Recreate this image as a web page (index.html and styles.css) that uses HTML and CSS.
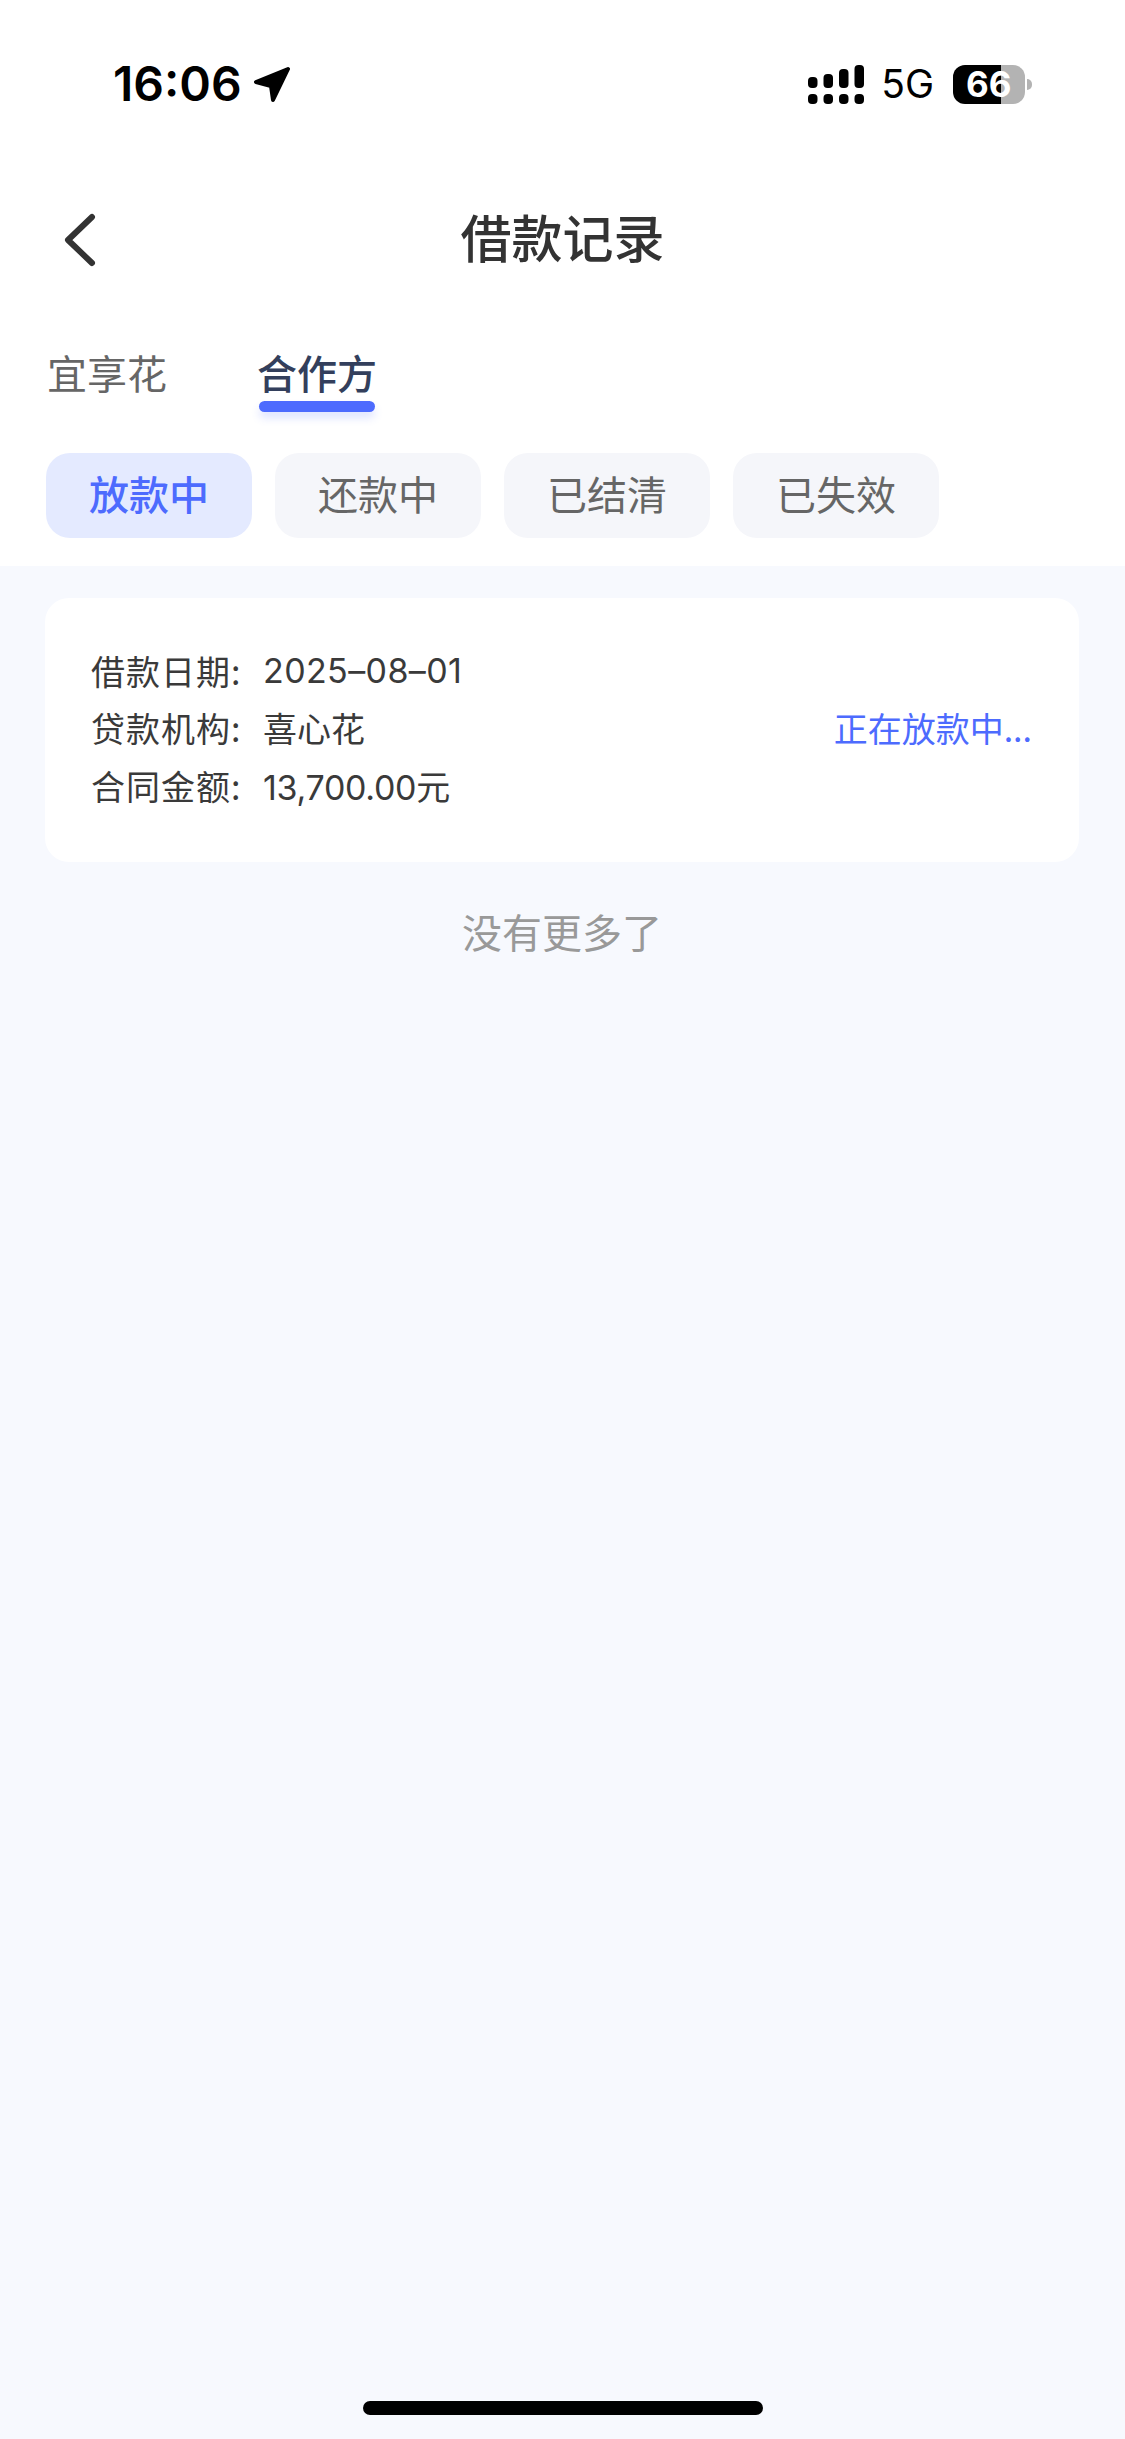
FILE: index.html
```html
<!DOCTYPE html>
<html lang="zh-CN">
<head>
<meta charset="utf-8">
<title>借款记录</title>
<link rel="stylesheet" href="styles.css">
</head>
<body>
<div class="page">
  <header class="top">
    <div class="status">
      <div class="status-left">
        <span class="time">16:06</span>
        <svg class="loc" width="38" height="37" viewBox="0 0 38 37"><path d="M35 3 L3 16 L18 20 L20 34 Z" fill="#000" stroke="#000" stroke-width="4" stroke-linejoin="round"/></svg>
      </div>
      <div class="status-right">
        <svg class="signal" width="56" height="39" viewBox="0 0 56 39">
          <g fill="#000">
            <rect x="0" y="12" width="9.5" height="11" rx="4"/><rect x="15.5" y="9" width="9.5" height="14" rx="4"/><rect x="31" y="4" width="9.5" height="19" rx="4"/><rect x="46.5" y="0" width="9.5" height="23" rx="4"/>
            <rect x="0" y="29" width="9.5" height="10" rx="4"/><rect x="15.5" y="29" width="9.5" height="10" rx="4"/><rect x="31" y="29" width="9.5" height="10" rx="4"/><rect x="46.5" y="29" width="9.5" height="10" rx="4"/>
          </g>
        </svg>
        <span class="net">5G</span>
        <div class="battery"><div class="battery-body"><span class="battery-text">66</span></div><i class="battery-nub"></i></div>
      </div>
    </div>
    <nav class="nav">
      <svg class="back" width="36" height="56" viewBox="0 0 36 56"><path d="M30 5 L6 28 L30 51" fill="none" stroke="#333" stroke-width="6" stroke-linecap="round" stroke-linejoin="round"/></svg>
      <h1 class="title">借款记录</h1>
    </nav>
    <div class="tabs">
      <div class="tab">宜享花</div>
      <div class="tab tab-active">合作方</div>
    </div>
    <div class="chips">
      <div class="chip chip-active">放款中</div>
      <div class="chip">还款中</div>
      <div class="chip">已结清</div>
      <div class="chip">已失效</div>
    </div>
  </header>
  <main class="content">
    <section class="card">
      <div class="rows">
        <div class="row"><span class="label">借款日期:</span><span class="val val-date">2025–08–01</span></div>
        <div class="row"><span class="label">贷款机构:</span><span class="val">喜心花</span></div>
        <div class="row"><span class="label">合同金额:</span><span class="val val-amount">13,700.00元</span></div>
      </div>
      <div class="state">正在放款中...</div>
    </section>
    <p class="end">没有更多了</p>
  </main>
  <div class="home"></div>
</div>
</body>
</html>
```
FILE: styles.css
```css
* { box-sizing: border-box; }
html, body { margin: 0; padding: 0; }
body { font-family: "Inter", "Noto Sans CJK SC", sans-serif; background: #f7f9fe; }
.page { position: relative; width: 1125px; height: 2439px; display: flex; flex-direction: column; overflow: hidden; }
.top { background: #fff; padding-bottom: 28px; }

.status { height: 180px; padding: 62px 93px 0 113px; display: flex; justify-content: space-between; align-items: flex-start; }
.status-left { display: flex; align-items: center; gap: 11px; height: 44px; }
.time { font-size: 48px; font-weight: 600; line-height: 44px; color: #000; }
.loc { display: block; }
.status-right { display: flex; align-items: center; height: 44px; }
.signal { display: block; }
.net { font-size: 39px; line-height: 40px; color: #000; margin-left: 17px; }
.battery { display: flex; align-items: center; margin-left: 19px; }
.battery-body { width: 72px; height: 39px; border-radius: 12px; background: linear-gradient(90deg, #000 0 48px, #b3b3b3 48px 100%); display: flex; align-items: center; padding-left: 13px; }
.battery-text { font-size: 35px; line-height: 39px; font-weight: 700; color: #fff; }
.battery-nub { display: block; width: 5px; height: 11px; margin-left: 2px; background: #b3b3b3; border-radius: 0 5px 5px 0; }

.nav { height: 120px; position: relative; display: flex; align-items: center; justify-content: center; padding-bottom: 8px; }
.back { position: absolute; left: 62px; top: 32px; display: block; }
.title { margin: 0; font-size: 51px; line-height: 70px; font-weight: 500; color: #333; font-family: "Noto Sans CJK SC", sans-serif; }

.tabs { display: flex; gap: 90px; padding: 45px 0 0 47px; height: 153px; }
.tab { position: relative; font-family: "Noto Sans CJK SC", sans-serif; font-size: 40px; line-height: 54px; color: #666; height: 54px; }
.tab-active { color: #333f5c; font-weight: 500; }
.tab-active::after { content: ""; position: absolute; left: 2px; right: 2px; top: 56px; height: 11px; border-radius: 6px; background: #4d6bfe; box-shadow: 0 6px 8px rgba(77, 107, 254, 0.18); }

.chips { display: flex; gap: 23px; padding-left: 46px; }
.chip { width: 206px; height: 85px; padding-bottom: 5px; border-radius: 24px; background: #f5f6fa; color: #666; font-family: "Noto Sans CJK SC", sans-serif; font-size: 40px; display: flex; align-items: center; justify-content: center; }
.chip-active { background: #e4eaff; color: #4d6bfe; font-weight: 500; }

.content { flex: 1; padding: 32px 46px 0 45px; }
.card { height: 264px; background: #fff; border-radius: 24px; padding: 0 47px 6px 46px; display: flex; align-items: center; justify-content: space-between; }
.rows { display: flex; flex-direction: column; padding-top: 1px; }
.row { height: 57.5px; display: flex; align-items: center; font-family: "Noto Sans CJK SC", sans-serif; font-size: 34px; color: #3a3a3a; }
.label { width: 172px; letter-spacing: 1px; }
.val { font-family: "Inter", "Noto Sans CJK SC", sans-serif; font-size: 34px; letter-spacing: 0; }
.val-date { letter-spacing: 0.4px; }
.val-amount { letter-spacing: -0.3px; }
.state { font-family: "Noto Sans CJK SC", sans-serif; font-size: 34px; color: #4d6bfe; }
.end { margin: 41px 0 0; text-align: center; font-family: "Noto Sans CJK SC", sans-serif; font-size: 40px; line-height: 56px; color: #999; }

.home { position: absolute; left: 363px; bottom: 24px; width: 400px; height: 14px; border-radius: 7px; background: #000; }
```
